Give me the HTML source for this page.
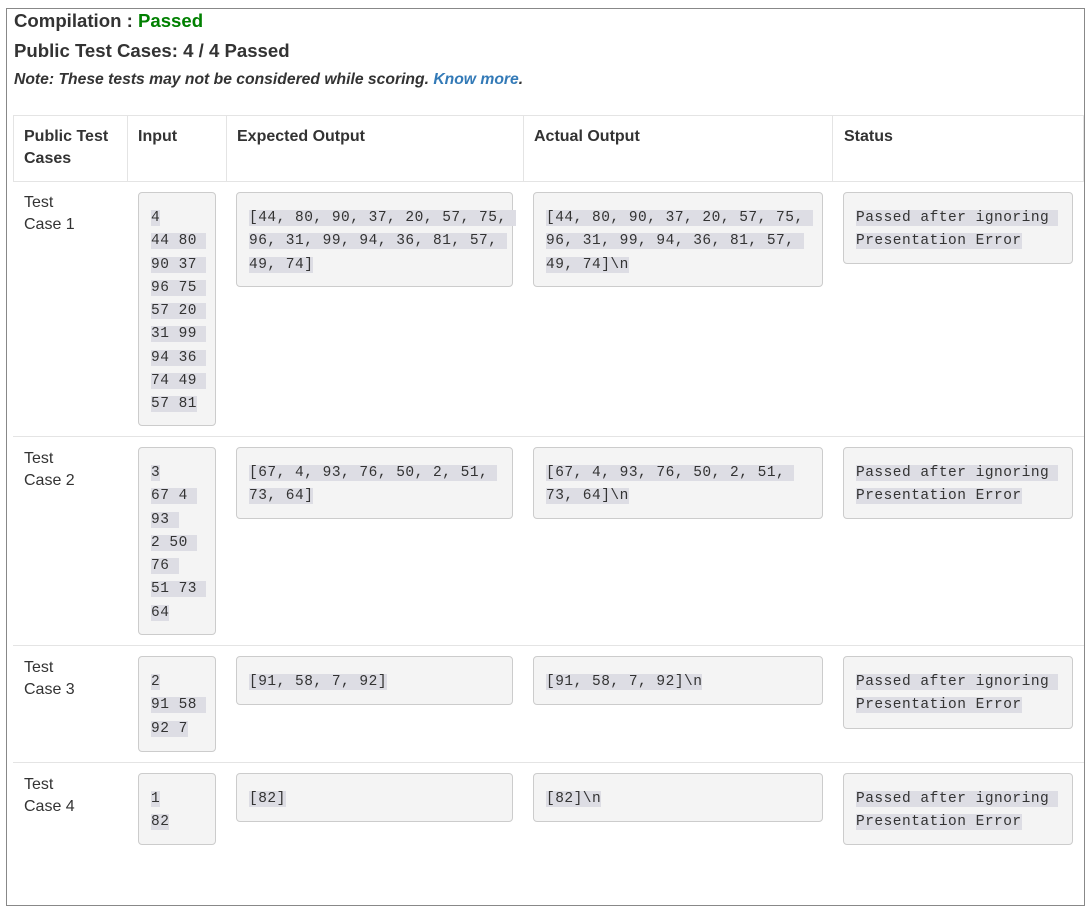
<!DOCTYPE html>
<html><head><style>
*{margin:0;padding:0;box-sizing:border-box}
body{width:1090px;height:908px;background:#fff;font-family:"Liberation Sans",Arial,sans-serif;color:#333;position:relative;overflow:hidden}
.a{position:absolute}
.frame{left:6px;top:8px;width:1079px;height:898px;border:1px solid #888}
.h{font-weight:bold;font-size:18.6px;left:14px;color:#333}
.hd{font-weight:bold;font-size:16px;line-height:22px;top:126px}
.vl{width:1px;background:#e4e4e4}
.hl{height:1px;background:#e4e4e4;left:13px;width:1071px}
.tc{font-size:16px;line-height:22px;left:24px;top:2px}
.box{background:#f4f4f4;border:1px solid #ccc;border-radius:4px;padding:14px 12px 0 12px;font-family:"Liberation Mono","DejaVu Sans Mono",monospace;font-size:14.5px;letter-spacing:0.5px;line-height:23.3px;color:#333}
.box span{background:#dddde4;white-space:pre}
</style></head><body>
<div class="a frame"></div>
<div class="a h" style="top:10px">Compilation : <span style="color:#008000">Passed</span></div>
<div class="a h" style="top:40px">Public Test Cases: 4 / 4 Passed</div>
<div class="a" style="left:14px;top:71px;font-size:15.7px;font-weight:bold;font-style:italic">Note: These tests may not be considered while scoring. <span style="color:#337ab7">Know more</span>.</div>

<div class="a hl" style="top:115px"></div>
<div class="a hl" style="top:181px"></div>
<div class="a hl" style="top:436px"></div>
<div class="a hl" style="top:645px"></div>
<div class="a hl" style="top:762px"></div>
<div class="a vl" style="left:13px;top:115px;height:67px"></div>
<div class="a vl" style="left:127px;top:115px;height:67px"></div>
<div class="a vl" style="left:226px;top:115px;height:67px"></div>
<div class="a vl" style="left:523px;top:115px;height:67px"></div>
<div class="a vl" style="left:832px;top:115px;height:67px"></div>
<div class="a vl" style="left:1083px;top:115px;height:67px"></div>

<div class="a hd" style="left:24px">Public Test<br>Cases</div>
<div class="a hd" style="left:138px">Input</div>
<div class="a hd" style="left:237px">Expected Output</div>
<div class="a hd" style="left:534px">Actual Output</div>
<div class="a hd" style="left:844px">Status</div>

<div class="a tc" style="top:192px">Test<br>Case 1</div>
<div class="a box" style="left:138px;top:192px;width:78px;height:234px"><span>4</span><br><span>44 80 </span><br><span>90 37 </span><br><span>96 75 </span><br><span>57 20 </span><br><span>31 99 </span><br><span>94 36 </span><br><span>74 49 </span><br><span>57 81</span></div>
<div class="a box" style="left:236px;top:192px;width:277px;height:95px"><span>[44, 80, 90, 37, 20, 57, 75, </span><br><span>96, 31, 99, 94, 36, 81, 57, </span><br><span>49, 74]</span></div>
<div class="a box" style="left:533px;top:192px;width:290px;height:95px"><span>[44, 80, 90, 37, 20, 57, 75, </span><br><span>96, 31, 99, 94, 36, 81, 57, </span><br><span>49, 74]\n</span></div>
<div class="a box" style="left:843px;top:192px;width:230px;height:72px"><span>Passed after ignoring </span><br><span>Presentation Error</span></div>

<div class="a tc" style="top:448px">Test<br>Case 2</div>
<div class="a box" style="left:138px;top:447px;width:78px;height:188px"><span>3</span><br><span>67 4 </span><br><span>93 </span><br><span>2 50 </span><br><span>76 </span><br><span>51 73 </span><br><span>64</span></div>
<div class="a box" style="left:236px;top:447px;width:277px;height:72px"><span>[67, 4, 93, 76, 50, 2, 51, </span><br><span>73, 64]</span></div>
<div class="a box" style="left:533px;top:447px;width:290px;height:72px"><span>[67, 4, 93, 76, 50, 2, 51, </span><br><span>73, 64]\n</span></div>
<div class="a box" style="left:843px;top:447px;width:230px;height:72px"><span>Passed after ignoring </span><br><span>Presentation Error</span></div>

<div class="a tc" style="top:657px">Test<br>Case 3</div>
<div class="a box" style="left:138px;top:656px;width:78px;height:96px"><span>2</span><br><span>91 58 </span><br><span>92 7</span></div>
<div class="a box" style="left:236px;top:656px;width:277px;height:49px"><span>[91, 58, 7, 92]</span></div>
<div class="a box" style="left:533px;top:656px;width:290px;height:49px"><span>[91, 58, 7, 92]\n</span></div>
<div class="a box" style="left:843px;top:656px;width:230px;height:73px"><span>Passed after ignoring </span><br><span>Presentation Error</span></div>

<div class="a tc" style="top:774px">Test<br>Case 4</div>
<div class="a box" style="left:138px;top:773px;width:78px;height:72px"><span>1</span><br><span>82</span></div>
<div class="a box" style="left:236px;top:773px;width:277px;height:49px"><span>[82]</span></div>
<div class="a box" style="left:533px;top:773px;width:290px;height:49px"><span>[82]\n</span></div>
<div class="a box" style="left:843px;top:773px;width:230px;height:72px"><span>Passed after ignoring </span><br><span>Presentation Error</span></div>
</body></html>
